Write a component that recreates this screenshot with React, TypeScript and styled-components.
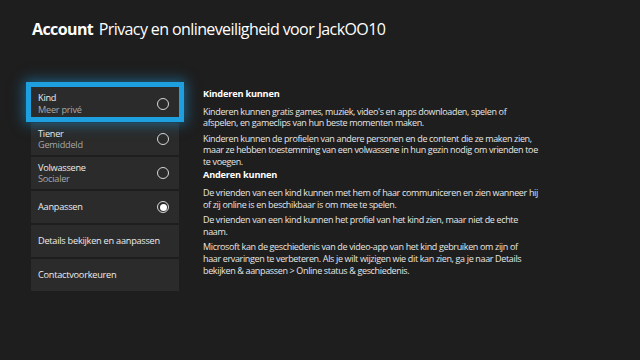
import React from "react";
import styled, { createGlobalStyle } from "styled-components";

const GlobalStyle = createGlobalStyle`
  html, body { margin: 0; padding: 0; background: #1e1e1e; }
  body { font-family: "Open Sans", "Noto Sans", sans-serif; }
`;

const Page = styled.div`
  width: 640px;
  height: 360px;
  background: #1e1e1e;
  color: #f0f0f0;
  overflow: hidden;
  box-sizing: border-box;
  padding: 17px 0 0 32px;
`;

const Title = styled.h1`
  margin: 0;
  font-size: 16px;
  font-weight: 400;
  line-height: 24px;
  color: #ffffff;
  white-space: nowrap;
  letter-spacing: -0.6px;
`;

const Strong = styled.span`
  font-weight: 700;
  margin-right: 2px;
`;

const Body = styled.div`
  display: flex;
  margin-top: 46px;
  margin-left: -1px;
  gap: 24px;
`;

const Menu = styled.div`
  width: 148px;
  display: flex;
  flex-direction: column;
  gap: 2px;
`;

const Item = styled.div<{ $focused?: boolean }>`
  height: ${(p) => (p.$focused ? "30px" : "32px")};
  margin-bottom: ${(p) => (p.$focused ? "4px" : "0")};
  background: #2b2b2b;
  display: flex;
  align-items: center;
  justify-content: space-between;
  padding: ${(p) => (p.$focused ? "3px 7px 0 7px" : "0 7px")};
  box-sizing: border-box;
  outline: ${(p) => (p.$focused ? "5px solid #1e9fe0" : "none")};
  box-shadow: ${(p) =>
    p.$focused ? "0 0 12px 7px rgba(30, 160, 230, 0.5)" : "none"};
  position: relative;
  z-index: ${(p) => (p.$focused ? 1 : 0)};
`;

const Labels = styled.div`
  display: flex;
  flex-direction: column;
`;

const Primary = styled.span`
  font-size: 9.2px;
  line-height: 11.5px;
  color: #ececec;
  letter-spacing: -0.25px;
`;

const Secondary = styled.span`
  font-size: 9.2px;
  line-height: 11.5px;
  color: #a8a8a8;
  letter-spacing: -0.25px;
`;

const Radio = styled.span<{ $checked?: boolean }>`
  width: 10px;
  height: 10px;
  border-radius: 50%;
  border: 1.2px solid #d8d8d8;
  margin-right: 3px;
  display: flex;
  align-items: center;
  justify-content: center;
  flex-shrink: 0;
  &::after {
    content: "";
    display: ${(p) => (p.$checked ? "block" : "none")};
    width: 7px;
    height: 7px;
    border-radius: 50%;
    background: #ffffff;
  }
`;

const Content = styled.div`
  width: 360px;
  margin-top: 1px;
`;

const Heading = styled.h2`
  margin: 0 0 5.5px 0;
  font-size: 9.2px;
  line-height: 12px;
  font-weight: 700;
  color: #ffffff;
  letter-spacing: -0.2px;
`;

const Para = styled.p`
  margin: 0 0 3.5px 0;
  font-size: 9px;
  line-height: 11.8px;
  color: #e6e6e6;
  letter-spacing: -0.35px;
  white-space: nowrap;
`;

const Section = styled.div`
  & + & {
    margin-top: -2px;
  }
`;

type Opt = { title: string; sub?: string; radio?: boolean; checked?: boolean; focused?: boolean };

const options: Opt[] = [
  { title: "Kind", sub: "Meer privé", radio: true, focused: true },
  { title: "Tiener", sub: "Gemiddeld", radio: true },
  { title: "Volwassene", sub: "Socialer", radio: true },
  { title: "Aanpassen", radio: true, checked: true },
  { title: "Details bekijken en aanpassen" },
  { title: "Contactvoorkeuren" },
];

export default function App() {
  return (
    <>
      <GlobalStyle />
      <Page>
        <Title>
          <Strong>Account</Strong> Privacy en onlineveiligheid voor JackOO10
        </Title>
        <Body>
          <Menu>
            {options.map((o) => (
              <Item key={o.title} $focused={o.focused}>
                <Labels>
                  <Primary>{o.title}</Primary>
                  {o.sub && <Secondary>{o.sub}</Secondary>}
                </Labels>
                {o.radio && <Radio $checked={o.checked} />}
              </Item>
            ))}
          </Menu>
          <Content>
            <Section>
              <Heading>Kinderen kunnen</Heading>
              <Para>
                Kinderen kunnen gratis games, muziek, video's en apps downloaden, spelen of
                <br />
                afspelen, en gameclips van hun beste momenten maken.
              </Para>
              <Para>
                Kinderen kunnen de profielen van andere personen en de content die ze maken zien,
                <br />
                maar ze hebben toestemming van een volwassene in hun gezin nodig om vrienden toe
                <br />
                te voegen.
              </Para>
            </Section>
            <Section>
              <Heading>Anderen kunnen</Heading>
              <Para>
                De vrienden van een kind kunnen met hem of haar communiceren en zien wanneer hij
                <br />
                of zij online is en beschikbaar is om mee te spelen.
              </Para>
              <Para>
                De vrienden van een kind kunnen het profiel van het kind zien, maar niet de echte
                <br />
                naam.
              </Para>
              <Para>
                Microsoft kan de geschiedenis van de video-app van het kind gebruiken om zijn of
                <br />
                haar ervaringen te verbeteren. Als je wilt wijzigen wie dit kan zien, ga je naar Details
                <br />
                bekijken &amp; aanpassen &gt; Online status &amp; geschiedenis.
              </Para>
            </Section>
          </Content>
        </Body>
      </Page>
    </>
  );
}
